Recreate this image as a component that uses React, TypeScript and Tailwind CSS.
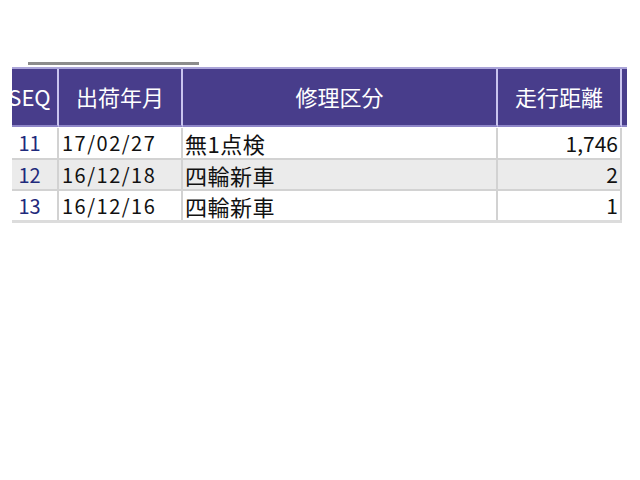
import React from "react";

const rows = [
  { seq: "11", date: "17/02/27", kind: "無1点検", dist: "1,746", bg: "bg-white" },
  { seq: "12", date: "16/12/18", kind: "四輪新車", dist: "2", bg: "bg-[#ebebeb]" },
  { seq: "13", date: "16/12/16", kind: "四輪新車", dist: "1", bg: "bg-white" },
];

export default function App() {
  return (
    <div
      className="w-[640px] h-[480px] bg-white overflow-hidden"
      style={{ fontFamily: '"Noto Sans CJK JP", "Noto Sans", sans-serif' }}
    >
      <div className="pt-[62px] pl-[28px]">
        <div className="w-[171px] h-[3px] bg-[#8c8c8c]" />
      </div>
      <div className="ml-[12px] mt-[2px] w-[616px] overflow-hidden">
        <div className="-ml-[10px] w-[625px]">
          {/* header */}
          <div className="flex h-[60px] border-t-2 border-[#aaa4d8] bg-[#483d8b] text-white text-[22px] leading-none">
            <div className="w-[57px] flex items-center justify-center pb-[2px] border-r-2 border-[#c9c4ee] border-b-2 border-b-[#8e86c8]">SEQ</div>
            <div className="w-[124px] flex items-center justify-center pb-[2px] border-r-2 border-[#c9c4ee] border-b-2 border-b-[#8e86c8]">出荷年月</div>
            <div className="w-[315px] flex items-center justify-center pb-[2px] border-r-2 border-[#c9c4ee] border-b-2 border-b-[#8e86c8]">修理区分</div>
            <div className="w-[124px] flex items-center justify-center pb-[2px] border-r-2 border-[#c9c4ee] border-b-2 border-b-[#8e86c8]">走行距離</div>
            <div className="w-[5px] border-b-2 border-b-[#8e86c8]" />
          </div>
          {/* rows */}
          <div className="w-[620px] border-b-[3px] border-[#dcdcdc]">
            {rows.map((r, i) => (
              <div
                key={r.seq}
                className={`flex h-[31px] text-[20px] leading-none text-[#111] ${r.bg} ${i > 0 ? "border-t-2 border-[#d2d2d2]" : "border-t border-white"}`}
              >
                <div className="w-[57px] flex items-center justify-center text-[#1f2a7c] border-r-2 border-[#d2d2d2]">
                  {r.seq}
                </div>
                <div className="w-[124px] flex items-center pl-[3px] tracking-[1.5px] border-r-2 border-[#d2d2d2]">
                  {r.date}
                </div>
                <div className="w-[315px] flex items-center pl-[2px] text-[22px] tracking-[0.5px] border-r-2 border-[#d2d2d2]">
                  {r.kind}
                </div>
                <div className="w-[124px] flex items-center justify-end pr-[2px] text-[21px] border-r-2 border-[#d2d2d2]">
                  {r.dist}
                </div>
              </div>
            ))}
          </div>
        </div>
      </div>
    </div>
  );
}
